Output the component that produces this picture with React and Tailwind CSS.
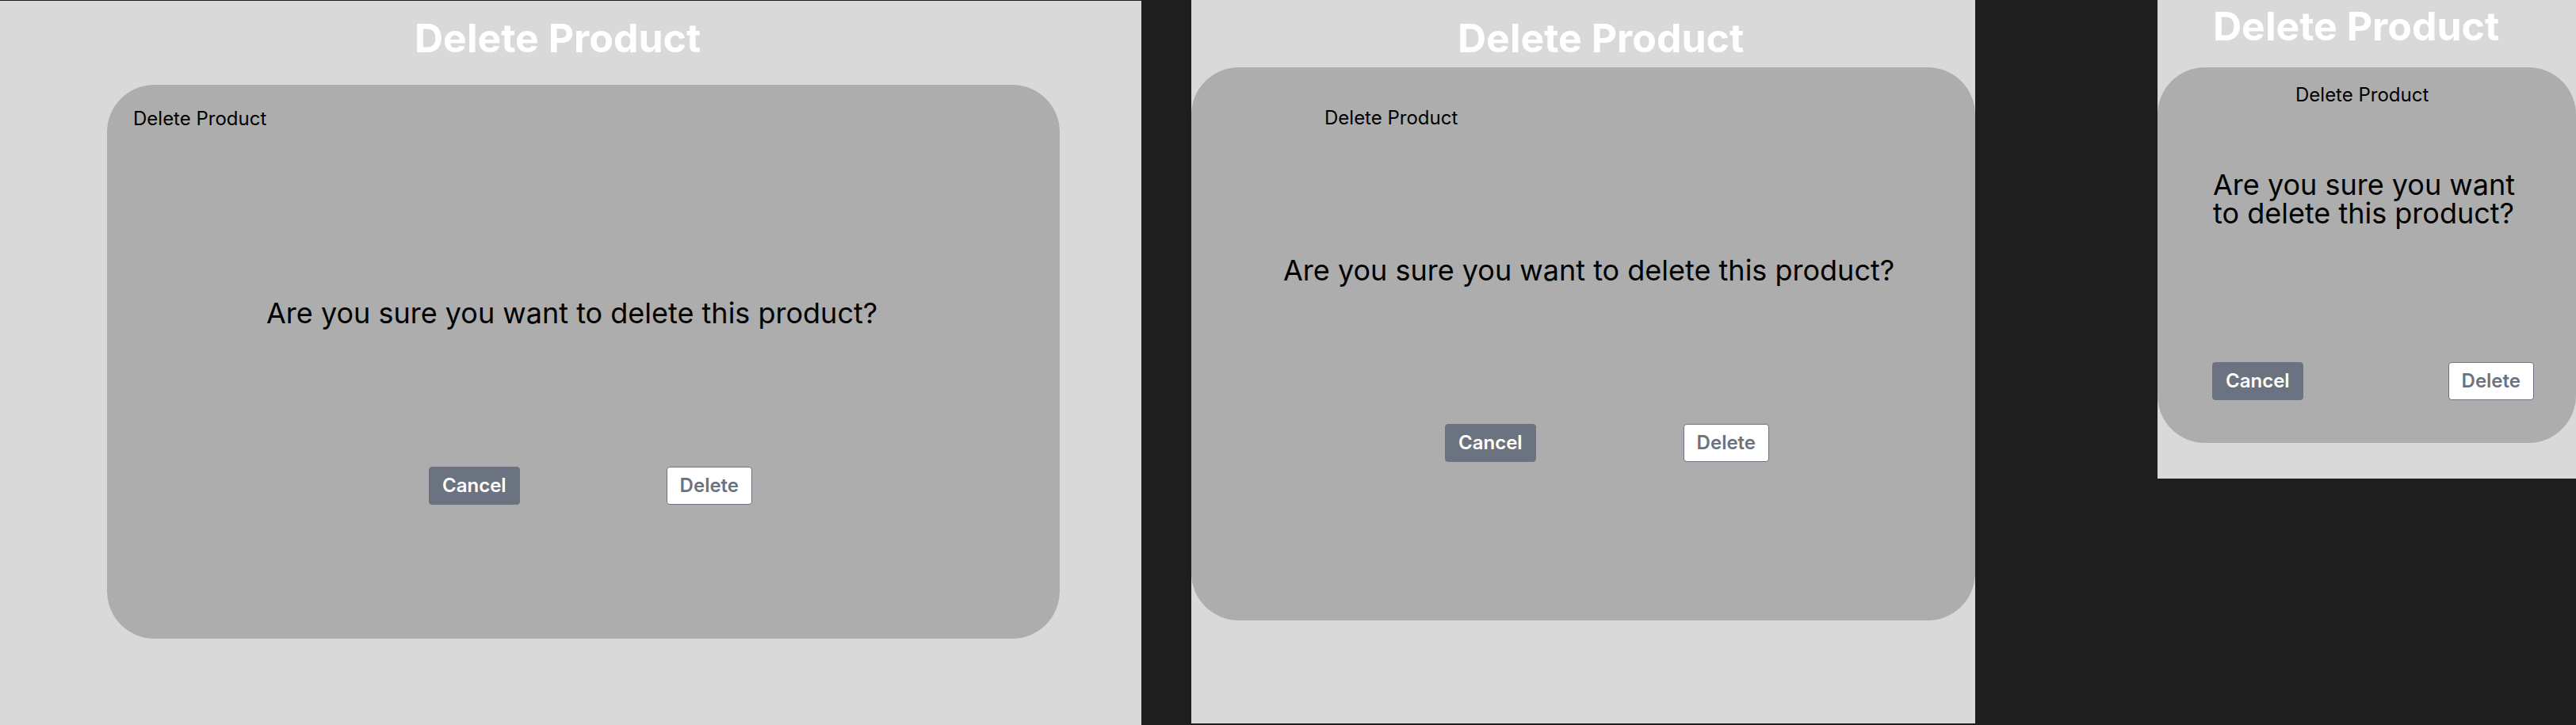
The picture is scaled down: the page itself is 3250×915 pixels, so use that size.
function Buttons({ className }) {
    return (
        <div className={'flex items-center ' + className}>
            <button className="h-12 px-4 rounded border border-[#6b7280] bg-[#6b7280] text-white text-2xl font-semibold">
                Cancel
            </button>
            <button className="h-12 px-4 rounded border border-[#6b7280] bg-white text-[#6b7280] text-2xl font-semibold">
                Delete
            </button>
        </div>
    );
}

export default function App() {
    return (
        <div className="flex items-start h-[915px] w-[3250px] overflow-hidden bg-[#1e1e1e] font-['Inter','Noto_Sans',sans-serif]">
            {/* Desktop */}
            <div className="mt-px w-[1440px] h-[914px] shrink-0 bg-[#d9d9d9] flex flex-col">
                <h1 className="pt-[22px] pl-[523px] text-[50px] leading-none font-bold text-white">Delete Product</h1>
                <div className="mt-[34px] ml-[135px] w-[1202px] h-[699px] rounded-[60px] bg-[#adadad] flex flex-col">
                    <p className="pt-[27px] pl-[33px] text-2xl text-black">Delete Product</p>
                    <p className="mt-[209px] pl-[201px] text-4xl text-black">
                        Are you sure you want to delete this product?
                    </p>
                    <Buttons className="mt-[174px] pl-[406px] gap-[185px]" />
                </div>
            </div>

            {/* Tablet */}
            <div className="ml-[63px] w-[989px] h-[913px] shrink-0 bg-[#d9d9d9] flex flex-col">
                <h1 className="pt-[23px] pl-[336px] text-[50px] leading-none font-bold text-white">Delete Product</h1>
                <div className="mt-[12px] w-[989px] h-[698px] rounded-[60px] bg-[#adadad] flex flex-col">
                    <p className="pt-[48px] pl-[168px] text-2xl text-black">Delete Product</p>
                    <p className="mt-[156px] pl-[116px] text-4xl text-black">
                        Are you sure you want to delete this product?
                    </p>
                    <Buttons className="mt-[174px] pl-[320px] gap-[186px]" />
                </div>
            </div>

            {/* Mobile */}
            <div className="ml-[230px] w-[528px] h-[604px] shrink-0 bg-[#d9d9d9] flex flex-col">
                <h1 className="pt-[8px] pl-[70px] text-[50px] leading-none font-bold text-white">Delete Product</h1>
                <div className="mt-[27px] w-[528px] h-[474px] rounded-[60px] bg-[#adadad] flex flex-col">
                    <p className="pt-[19px] pl-[174px] text-2xl text-black">Delete Product</p>
                    <p className="mt-[79px] pl-[70px] pr-[60px] text-4xl leading-9 text-black">
                        Are you sure you want to delete this product?
                    </p>
                    <Buttons className="mt-[170px] pl-[69px] pr-[53px] justify-between" />
                </div>
            </div>
        </div>
    );
}
